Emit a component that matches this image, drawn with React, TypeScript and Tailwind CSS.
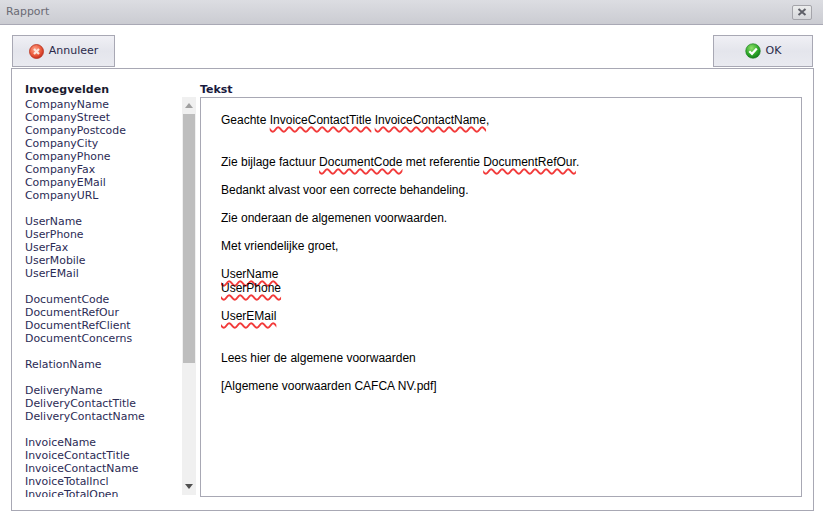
import React from 'react';

const fieldGroups = [
  ['CompanyName', 'CompanyStreet', 'CompanyPostcode', 'CompanyCity', 'CompanyPhone', 'CompanyFax', 'CompanyEMail', 'CompanyURL'],
  ['UserName', 'UserPhone', 'UserFax', 'UserMobile', 'UserEMail'],
  ['DocumentCode', 'DocumentRefOur', 'DocumentRefClient', 'DocumentConcerns'],
  ['RelationName'],
  ['DeliveryName', 'DeliveryContactTitle', 'DeliveryContactName'],
  ['InvoiceName', 'InvoiceContactTitle', 'InvoiceContactName', 'InvoiceTotalIncl', 'InvoiceTotalOpen'],
];

function Squiggle({ children }: { children: React.ReactNode }) {
  return <span className="underline decoration-wavy decoration-[#f23a3a] decoration-[1.5px] underline-offset-[2px]">{children}</span>;
}

function Line({ children }: { children?: React.ReactNode }) {
  return <div className="h-[14px] leading-[14px] whitespace-nowrap">{children}</div>;
}

function ToolButton({ width, icon, label }: { width: string; icon: React.ReactNode; label: string }) {
  return (
    <button className={`${width} h-[32px] flex items-center justify-center gap-[5px] border border-[#a8a8b4] bg-gradient-to-b from-[#f0f0f5] via-[#e4e5ec] to-[#e9eaf0] text-[11px] text-[#2a2a4a]`}>
      {icon}
      <span className="pt-[1px]">{label}</span>
    </button>
  );
}

export default function App() {
  return (
    <div className="w-[823px] h-[516px] bg-white overflow-hidden font-['DejaVu_Sans',sans-serif]">
      <div className="h-[25px] flex items-center justify-between pl-[6px] pr-[11px] border-b border-[#a9a9b5] bg-gradient-to-b from-[#dcdde2] to-[#cbccd2]">
        <span className="text-[10.9px] pt-[1px] text-[#6a6a74]">Rapport</span>
        <div className="w-[20px] h-[15px] flex items-center justify-center rounded-[2px] border border-[#a4a4aa] bg-gradient-to-b from-[#eceded] to-[#d6d7db]">
          <svg width="10" height="8" viewBox="0 0 10 8">
            <path d="M1.5 1 L8.5 7 M8.5 1 L1.5 7" stroke="#5f6068" strokeWidth="2" />
          </svg>
        </div>
      </div>

      <div className="flex justify-between pl-[12px] pr-[10px] pt-[10px]">
        <ToolButton
          width="w-[103px]"
          label="Annuleer"
          icon={
            <svg width="15" height="15" viewBox="0 0 15 15">
              <defs>
                <radialGradient id="red" cx="40%" cy="35%" r="70%">
                  <stop offset="0%" stopColor="#ffa58c" />
                  <stop offset="60%" stopColor="#ea5a3c" />
                  <stop offset="100%" stopColor="#c22a1a" />
                </radialGradient>
              </defs>
              <circle cx="7.5" cy="7.5" r="7" fill="url(#red)" stroke="#b8321f" strokeWidth="0.8" />
              <path d="M5 5 L10 10 M10 5 L5 10" stroke="#fbe6dc" strokeWidth="2.2" />
            </svg>
          }
        />
        <ToolButton
          width="w-[100px]"
          label="OK"
          icon={
            <svg width="16" height="16" viewBox="0 0 16 16">
              <defs>
                <radialGradient id="green" cx="40%" cy="30%" r="75%">
                  <stop offset="0%" stopColor="#8fe06a" />
                  <stop offset="60%" stopColor="#2fa82a" />
                  <stop offset="100%" stopColor="#12761a" />
                </radialGradient>
              </defs>
              <circle cx="8" cy="8" r="7.3" fill="url(#green)" stroke="#177a1c" strokeWidth="0.6" />
              <path d="M4.3 8.2 L7 10.8 L11.8 5.4" fill="none" stroke="#fff" strokeWidth="2.2" />
            </svg>
          }
        />
      </div>

      <div className="ml-[11px] mt-[1px] w-[803px] h-[443px] border border-[#a8a8b4] flex pt-[14px]">
        <div className="w-[170px] shrink-0 pl-[13px] h-[414px] flex flex-col">
          <div className="text-[11px] leading-[13px] font-bold tracking-[0.05px] text-[#1a1a2e] h-[15px]">Invoegvelden</div>
          <div className="w-[157px] h-[399px] overflow-hidden text-[10.9px] leading-[13px] text-[#2b2b55]">
            {fieldGroups.map((group, i) => (
              <div key={i} className="mb-[13px]">
                {group.map((name) => (
                  <div key={name} className="whitespace-nowrap">{name}</div>
                ))}
              </div>
            ))}
          </div>
        </div>

        <div className="w-[18px] shrink-0 pt-[14px]">
          <div className="w-[14px] h-[398px] bg-[#f0f0f0] flex flex-col">
            <div className="h-[17px] flex items-center justify-center">
              <svg width="8" height="5" viewBox="0 0 8 5"><path d="M4 0 L8 5 L0 5 Z" fill="#a0a0a0" /></svg>
            </div>
            <div className="h-[249px] bg-[#bebebe] mx-[1px]" />
            <div className="flex-1 flex items-end justify-center pb-[6px]">
              <svg width="8" height="5" viewBox="0 0 8 5"><path d="M0 0 L8 0 L4 5 Z" fill="#505050" /></svg>
            </div>
          </div>
        </div>

        <div className="w-[602px] flex flex-col">
          <div className="text-[11px] leading-[13px] font-bold text-[#1a1a3e] h-[14px]">Tekst</div>
          <div className="h-[400px] border border-[#a8a8b4] bg-white pl-[20px] pt-[15px] font-['Liberation_Sans',sans-serif] text-[12px] text-black">
            <Line>Geachte <Squiggle>InvoiceContactTitle</Squiggle> <Squiggle>InvoiceContactName</Squiggle>,</Line>
            <Line />
            <Line />
            <Line>Zie bijlage factuur <Squiggle>DocumentCode</Squiggle> met referentie <Squiggle>DocumentRefOur</Squiggle>.</Line>
            <Line />
            <Line>Bedankt alvast voor een correcte behandeling.</Line>
            <Line />
            <Line>Zie onderaan de algemenen voorwaarden.</Line>
            <Line />
            <Line>Met vriendelijke groet,</Line>
            <Line />
            <Line><Squiggle>UserName</Squiggle></Line>
            <Line><Squiggle>UserPhone</Squiggle></Line>
            <Line />
            <Line><Squiggle>UserEMail</Squiggle></Line>
            <Line />
            <Line />
            <Line>Lees hier de algemene voorwaarden</Line>
            <Line />
            <Line>[Algemene voorwaarden CAFCA NV.pdf]</Line>
          </div>
        </div>
      </div>
    </div>
  );
}
